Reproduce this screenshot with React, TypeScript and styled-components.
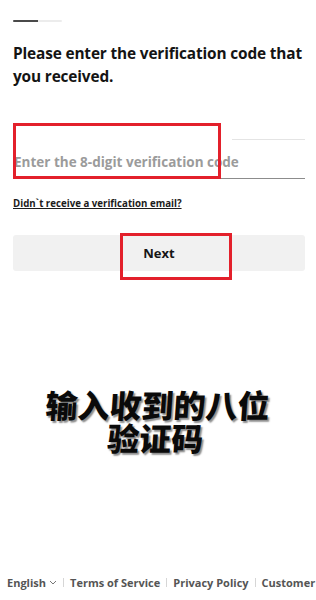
import styled, { createGlobalStyle } from "styled-components";

const GlobalStyle = createGlobalStyle`
  html, body {
    margin: 0;
    padding: 0;
    background: #ffffff;
  }
  body {
    font-family: "Open Sans", "Noto Sans", Arial, sans-serif;
    color: #161616;
  }
`;

const Page = styled.div`
  width: 316px;
  min-height: 600px;
  box-sizing: border-box;
  padding: 20px 11px 0 13px;
  display: flex;
  flex-direction: column;
  overflow: hidden;
`;

const Progress = styled.div`
  display: flex;
  width: 49px;
  height: 2px;
  border-radius: 1px;
  overflow: hidden;
  background: #ececec;
`;

const ProgressFill = styled.div`
  height: 100%;
  background: #4a4a4a;
`;

const Title = styled.h1`
  margin: 20px 0 0;
  font-size: 15.4px;
  line-height: 23px;
  font-weight: 700;
  letter-spacing: -0.15px;
  color: #141414;
`;

const Field = styled.div`
  position: relative;
  margin-top: 51px;
  height: 39px;
  display: flex;
  flex-direction: column;
  border-bottom: 1px solid #8c8c8c;
`;

const TopRule = styled.div`
  align-self: flex-end;
  width: 73px;
  height: 1px;
  background: #e4e4e4;
`;

const CodeInput = styled.input`
  flex: 1;
  border: none;
  outline: none;
  padding: 6px 0 0 1px;
  background: transparent;
  font-family: inherit;
  font-size: 13.5px;
  font-weight: 700;
  color: #222;

  &::placeholder {
    color: #9b9b9b;
  }
`;

const Highlight = styled.div<{ $top: number; $left: number; $width: number; $height: number }>`
  position: absolute;
  top: ${({ $top }) => $top}px;
  left: ${({ $left }) => $left}px;
  width: ${({ $width }) => $width}px;
  height: ${({ $height }) => $height}px;
  box-sizing: border-box;
  border: 3px solid #e3202b;
  pointer-events: none;
`;

const ResendLink = styled.a`
  margin-top: 18px;
  align-self: flex-start;
  font-size: 9.7px;
  line-height: 14px;
  font-weight: 700;
  color: #1c1c1c;
  text-decoration: underline;
  text-underline-offset: 1px;
`;

const ButtonWrap = styled.div`
  position: relative;
  margin-top: 24px;
`;

const NextButton = styled.button`
  width: 100%;
  height: 36px;
  border: none;
  border-radius: 3px;
  background: #f1f1f1;
  font-family: inherit;
  font-size: 13px;
  font-weight: 700;
  color: #161616;
  cursor: pointer;
`;

const Caption = styled.div`
  margin: 117px 0 0 -5px;
  text-align: center;
  font-family: "Noto Sans CJK SC", sans-serif;
  font-size: 32px;
  font-weight: 900;
  line-height: 33px;
  color: #0a0a0a;
  text-shadow: 2px 2px 1.5px rgba(0, 0, 0, 0.45);
  transform: skewX(-4deg);
`;

const Footer = styled.nav`
  margin: auto -11px 0 -6px;
  padding-bottom: 10px;
  display: flex;
  align-items: center;
  white-space: nowrap;
  font-size: 11px;
  font-weight: 700;
  color: #555555;
`;

const FooterItem = styled.span`
  display: inline-flex;
  align-items: center;
  gap: 3px;
`;

const Divider = styled.span`
  width: 1px;
  height: 9px;
  margin: 0 6px;
  background: #d6d6d6;
`;

const Chevron = () => (
  <svg width="8" height="5" viewBox="0 0 8 5" fill="none">
    <path d="M1 1l3 3 3-3" stroke="#777" strokeWidth="1" />
  </svg>
);

export default function App() {
  const step = 0.5;
  return (
    <>
      <GlobalStyle />
      <Page>
        <Progress>
          <ProgressFill style={{ width: `${step * 100}%` }} />
        </Progress>
        <Title>Please enter the verification code that you received.</Title>
        <Field>
          <TopRule />
          <CodeInput placeholder="Enter the 8-digit verification code" />
          <Highlight $top={-16} $left={0} $width={208} $height={56} />
        </Field>
        <ResendLink href="#">Didn`t receive a verification email?</ResendLink>
        <ButtonWrap>
          <NextButton>Next</NextButton>
          <Highlight $top={-2} $left={107} $width={112} $height={47} />
        </ButtonWrap>
        <Caption>
          输入收到的八位
          <br />
          验证码
        </Caption>
        <Footer>
          <FooterItem>
            English <Chevron />
          </FooterItem>
          <Divider />
          <FooterItem>Terms of Service</FooterItem>
          <Divider />
          <FooterItem>Privacy Policy</FooterItem>
          <Divider />
          <FooterItem>Customer</FooterItem>
        </Footer>
      </Page>
    </>
  );
}
